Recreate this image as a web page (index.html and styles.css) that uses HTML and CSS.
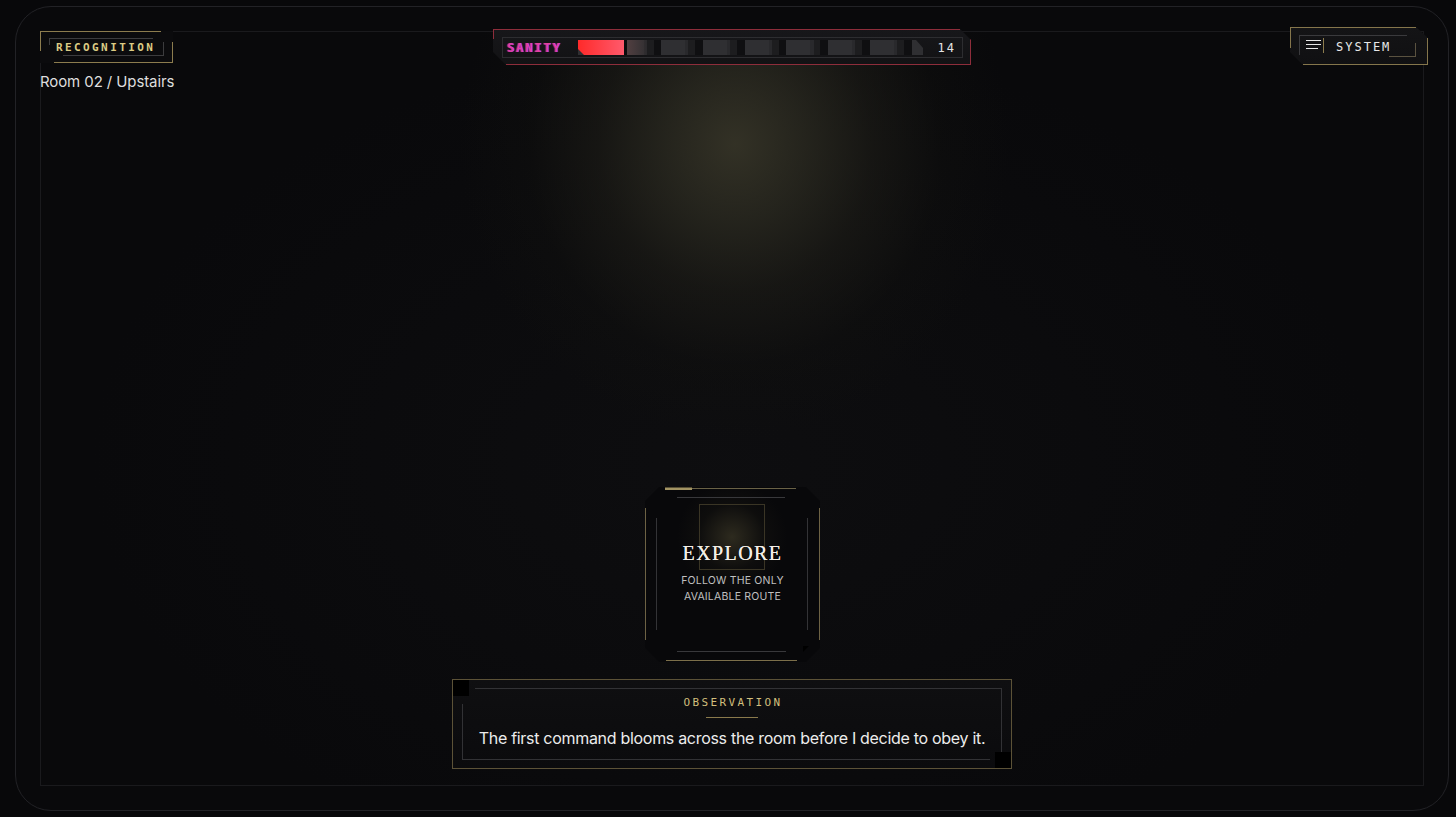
FILE: index.html
```html
<!DOCTYPE html>
<html lang="en">
<head>
<meta charset="utf-8">
<title>Recognition</title>
<link rel="stylesheet" href="styles.css">
</head>
<body>
<div class="frame">
  <main class="stage">
    <header class="hud">
      <div class="hud-left">
        <div class="badge">
          <svg class="deco" width="133" height="32" viewBox="0 0 133 32" aria-hidden="true">
            <path d="M0 0.5H121M0.5 0V20M14 31.5H133M132.5 11V32" stroke="#8c7c4e" fill="none"/>
            <path d="M9 7.5H113M9.5 7V14M23 24.5H123M123.5 11V25" stroke="#3c3c3e" fill="none"/>
          </svg>
          <span class="badge-text">RECOGNITION</span>
        </div>
        <p class="room">Room 02 / Upstairs</p>
      </div>

      <div class="sanity">
        <svg class="deco" width="478" height="36" viewBox="0 0 478 36" aria-hidden="true">
          <path d="M0 0.5H467M0.5 0V10M13 35.5H478M477.5 10V36" stroke="#8e2d3b" fill="none"/>
        </svg>
        <div class="sanity-inner">
          <span class="sanity-label">SANITY</span>
          <div class="track">
            <span class="fill"></span>
            <span class="divider"></span>
            <span class="trail"></span>
          </div>
          <span class="sanity-value">14</span>
        </div>
      </div>

      <div class="hud-right">
        <button class="system" type="button">
          <svg class="deco" width="138" height="38" viewBox="0 0 138 38" aria-hidden="true">
            <path d="M0 0.5H126M0.5 0V21M13 37.5H138M137.5 11V38" stroke="#85764c" fill="none"/>
            <path d="M9 8.5H117M9.5 8V28" stroke="#3a3a3d" fill="none"/>
            <path d="M99 29.5H125M125.5 16V30" stroke="#5a5240" fill="none"/>
          </svg>
          <svg class="burger" width="18" height="16" viewBox="0 0 18 16" aria-hidden="true">
            <path d="M0 2.5H15M0 6.5H15M0 10.5H12" stroke="#e6e6e6" stroke-width="1.2" fill="none"/>
            <path d="M17.5 0V15" stroke="#8c7c4e" fill="none"/>
          </svg>
          <span class="system-text">SYSTEM</span>
        </button>
      </div>
    </header>

    <section class="scene">
      <div class="card">
        <svg class="deco" width="175" height="175" viewBox="0 0 175 175" aria-hidden="true">
          <path d="M47 1.5H151" stroke="#6a6246" fill="none"/>
          <rect x="20" y="0.5" width="27" height="2.5" fill="#a39463"/>
          <path d="M32 10.5H140M32 164.5H141" stroke="#38383b" fill="none"/>
          <path d="M0.5 21V153M174.5 21V153" stroke="#6d6244" fill="none"/>
          <path d="M11.5 31V143M162.5 31V143" stroke="#333336" fill="none"/>
          <path d="M21 173.5H152" stroke="#7c6f4a" fill="none"/>
          <rect x="54.5" y="17.5" width="65" height="65" stroke="#3a3525" fill="none"/>
          <polygon points="158,159 164,159 158,165" fill="#000"/>
        </svg>
        <h2 class="card-title">EXPLORE</h2>
        <p class="card-sub">FOLLOW THE ONLY<br>AVAILABLE ROUTE</p>
      </div>

      <div class="obs">
        <svg class="deco" width="558" height="88" viewBox="0 0 558 88" aria-hidden="true">
          <path d="M22 8.5H548M9.5 24V80M9 79.5H537M548.5 8V72" stroke="#323235" fill="none"/>
          <rect x="0" y="0" width="16" height="16" fill="#000"/>
          <rect x="542" y="72" width="16" height="16" fill="#000"/>
        </svg>
        <span class="obs-label">OBSERVATION</span>
        <span class="obs-rule"></span>
        <p class="obs-text">The first command blooms across the room before I decide to obey it.</p>
      </div>
    </section>
  </main>
</div>
</body>
</html>
```

FILE: styles.css
```css
* { box-sizing: border-box; }

html, body {
  margin: 0;
  padding: 0;
  background: #08080a;
  width: 1456px;
  height: 817px;
  overflow: hidden;
}

body {
  font-family: Inter, "Noto Sans", sans-serif;
  color: #e6e6e6;
}

.frame {
  margin: 6px 0 0 15px;
  width: 1434px;
  height: 805px;
  border: 1px solid #222226;
  border-radius: 36px;
  padding: 24px;
  background: #09090b;
}

.stage {
  position: relative;
  width: 1384px;
  height: 755px;
  border: 1px solid #1a1a1d;
  display: flex;
  flex-direction: column;
  background:
    radial-gradient(ellipse 275px 295px at 694px 112px, rgba(58, 56, 42, 0.85) 0%, rgba(48, 47, 36, 0.7) 25%, rgba(34, 33, 26, 0.5) 50%, rgba(20, 20, 16, 0.25) 75%, rgba(0, 0, 0, 0) 100%),
    radial-gradient(ellipse 640px 420px at 690px 430px, rgba(18, 18, 20, 0.5) 0%, rgba(0, 0, 0, 0) 100%),
    #09090b;
}

.deco {
  position: absolute;
  left: 0;
  top: 0;
  pointer-events: none;
}

/* HUD */
.hud {
  display: grid;
  grid-template-columns: 1fr 478px 1fr;
  align-items: start;
}

.hud-left {
  display: flex;
  flex-direction: column;
  align-items: flex-start;
}

.badge {
  position: relative;
  width: 133px;
  height: 32px;
  margin: -1px 0 0 -1px;
  display: flex;
  align-items: center;
  padding: 1px 0 0 16px;
  background: #0b0b0d;
}

.badge-text {
  font-family: "DejaVu Sans Mono", "Liberation Mono", monospace;
  font-weight: 700;
  font-size: 11px;
  letter-spacing: 2.4px;
  color: #dccb84;
}

.room {
  margin: 9px 0 0 -1px;
  font-size: 15px;
  line-height: 20px;
  color: #dedede;
  letter-spacing: -0.1px;
}

/* Sanity */
.sanity {
  position: relative;
  width: 478px;
  height: 36px;
  margin-top: -3px;
  padding: 8px 0 0 9px;
  background: linear-gradient(180deg, #17171a, #121214);
  clip-path: polygon(0 0, 467px 0, 478px 11px, 478px 36px, 13px 36px, 0 23px);
}

.sanity-inner {
  width: 461px;
  height: 21px;
  border: 1px solid #2d2d30;
  display: flex;
  align-items: center;
  padding: 0 6px 0 4px;
}

.sanity-label {
  flex: 0 0 71px;
  font-family: "DejaVu Sans Mono", "Liberation Mono", monospace;
  font-weight: 700;
  font-size: 12px;
  letter-spacing: 1.9px;
  color: #e4409f;
  text-shadow: 1px 0 0 rgba(100, 60, 255, 0.9), -1px 0 0 rgba(255, 50, 90, 0.6);
}

.track {
  flex: 0 0 345px;
  height: 15px;
  display: flex;
  background: repeating-linear-gradient(90deg, #2f2f32 0 24px, #29292c 24px 27px, #1d1d1f 27px 34px, #0f0f11 34px 41.7px);
  clip-path: polygon(0 0, 338px 0, 345px 8px, 345px 100%, 0 100%);
}

.fill {
  flex: 0 0 46px;
  height: 100%;
  background: linear-gradient(90deg, #ff2a2a, #ff5a6c);
  clip-path: polygon(0 0, 100% 0, 100% 100%, 6px 100%, 0 9px);
}

.divider {
  flex: 0 0 3px;
  background: #0b0b0c;
}

.trail {
  flex: 0 0 20px;
  background: linear-gradient(90deg, rgba(110, 76, 76, 0.55), rgba(60, 50, 50, 0.1));
}

.sanity-value {
  margin-left: auto;
  font-family: "DejaVu Sans Mono", "Liberation Mono", monospace;
  font-size: 12px;
  letter-spacing: 2px;
  color: #e4e4e4;
}

/* System */
.hud-right {
  display: flex;
  justify-content: flex-end;
}

.system {
  position: relative;
  width: 138px;
  height: 38px;
  margin: -5px -5px 0 0;
  padding: 0 0 0 16px;
  border: 0;
  display: flex;
  align-items: center;
  background: linear-gradient(180deg, #141416, #101012);
  clip-path: polygon(0 0, 126px 0, 138px 11px, 138px 38px, 13px 38px, 0 25px);
  color: #e6e6e6;
  cursor: pointer;
}

.burger {
  display: block;
}

.system-text {
  margin-left: 12px;
  margin-top: 1px;
  font-family: "DejaVu Sans Mono", "Liberation Mono", monospace;
  font-size: 12px;
  letter-spacing: 2px;
  color: #e8e8e8;
}

/* Scene */
.scene {
  flex: 1;
  display: flex;
  flex-direction: column;
  align-items: center;
  justify-content: flex-end;
  gap: 17px;
  padding-bottom: 16px;
}

.card {
  position: relative;
  width: 175px;
  height: 175px;
  margin-left: 1px;
  display: flex;
  flex-direction: column;
  align-items: center;
  padding-top: 54px;
  background:
    radial-gradient(circle 55px at 87px 50px, rgba(70, 65, 44, 0.6), rgba(32, 30, 22, 0.25) 60%, rgba(0, 0, 0, 0) 100%),
    #08080a;
  clip-path: polygon(14px 0, 161px 0, 175px 14px, 175px 161px, 161px 175px, 14px 175px, 0 161px, 0 14px);
}

.card-title {
  position: relative;
  margin: 0;
  font-family: "Liberation Serif", "DejaVu Serif", serif;
  font-weight: 400;
  font-size: 20px;
  line-height: 24px;
  letter-spacing: 1.4px;
  color: #f2eee6;
  text-shadow: 0 0 0.6px #f2eee6;
}

.card-sub {
  position: relative;
  margin: 8px 0 0;
  font-size: 10.5px;
  line-height: 16px;
  text-align: center;
  color: #c0c0c0;
  letter-spacing: 0.2px;
}

.obs {
  position: relative;
  width: 560px;
  height: 90px;
  border: 1px solid #5c5237;
  display: flex;
  flex-direction: column;
  align-items: center;
  padding-top: 16px;
  background: linear-gradient(180deg, #0f0f11, #0b0b0d);
}

.obs-label {
  position: relative;
  font-family: "DejaVu Sans Mono", "Liberation Mono", monospace;
  font-size: 11px;
  line-height: 14px;
  letter-spacing: 2.4px;
  margin-left: 2px;
  color: #d2bf7c;
}

.obs-rule {
  position: relative;
  display: block;
  width: 52px;
  height: 1px;
  margin-top: 7px;
  background: #8a7a4c;
}

.obs-text {
  position: relative;
  margin: 9px 0 0;
  font-size: 16px;
  line-height: 22px;
  letter-spacing: -0.3px;
  color: #ececec;
}
```
